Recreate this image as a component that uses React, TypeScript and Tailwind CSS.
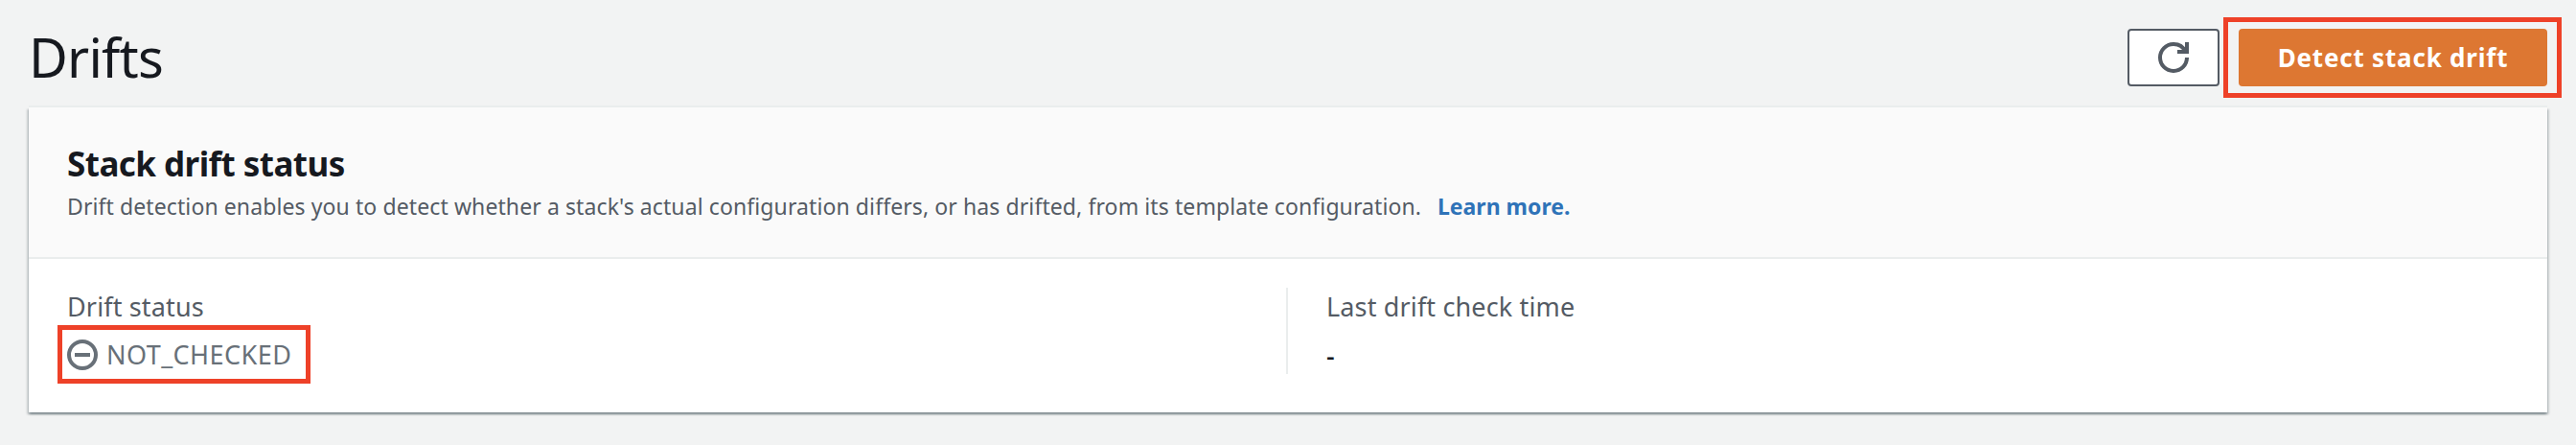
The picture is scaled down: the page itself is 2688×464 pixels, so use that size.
import type { ReactNode } from "react";

function RefreshIcon() {
  return (
    <svg className="size-8" viewBox="0 0 16 16" fill="none" stroke="#545b64" strokeWidth="2">
      <path d="M10 5h5V0" />
      <path d="M15 8a6.957 6.957 0 0 1-7 7 6.957 6.957 0 0 1-7-7 6.957 6.957 0 0 1 7-7 6.87 6.87 0 0 1 6.3 4" />
    </svg>
  );
}

function NotCheckedIcon() {
  return (
    <svg className="size-8 shrink-0" viewBox="0 0 16 16" fill="none" stroke="#687078" strokeWidth="2">
      <circle cx="8" cy="8" r="7" />
      <path d="M4 8h8" />
    </svg>
  );
}

function Label({ children }: { children: ReactNode }) {
  return (
    <div className="h-[30px] text-[27px] leading-[30px] tracking-[0.15px] text-[#545b64]">{children}</div>
  );
}

export default function App() {
  return (
    <main className="flex h-[464px] w-[2688px] flex-col overflow-hidden bg-[#f2f3f3] pr-[30px] pl-[30px] font-['Noto_Sans',sans-serif] whitespace-nowrap text-[#16191f]">
      <header className="flex h-[112px] items-start justify-between">
        <h1 className="mt-[29px] text-[56px] leading-[60px] tracking-[-0.8px]">Drifts</h1>
        <div className="flex gap-5 pt-[30px]">
          <button className="flex h-[60px] w-24 items-center justify-center rounded-[4px] border-2 border-[#545b64] bg-white">
            <RefreshIcon />
          </button>
          <div className="relative">
            <button className="flex h-[60px] w-[322px] items-center justify-center rounded-[4px] bg-[#dd7732] text-[26px] font-bold tracking-[0.8px] text-white">
              Detect stack drift
            </button>
            <div className="pointer-events-none absolute -top-[12px] -left-[16px] h-[84px] w-[353px] border-5 border-[#ee4128]" />
          </div>
        </div>
      </header>
      <section className="h-[318px] bg-white shadow-[0_2px_2px_0_rgba(0,28,36,0.3),2px_2px_2px_0_rgba(0,28,36,0.15),-2px_2px_2px_0_rgba(0,28,36,0.15),0_-2px_0_0_#eaeded]">
        <div className="flex h-[158px] flex-col gap-1 border-b-2 border-[#eaeded] bg-[#fafafa] pt-[39px] pl-10">
          <h2 className="text-[35px] leading-[40px] font-bold tracking-[-0.55px]">Stack drift status</h2>
          <p className="flex h-10 text-[23px] leading-[40px] text-[#545b64]">
            <span className="w-[1430px] tracking-[0.1px]">
              Drift detection enables you to detect whether a stack's actual configuration differs, or has drifted, from its template configuration.
            </span>
            <a className="font-bold text-[#2e73b8]">Learn more.</a>
          </p>
        </div>
        <div className="grid grid-cols-2 pt-[30px]">
          <div className="h-[90px] border-r-2 border-[#eaeded] pt-[5px] pl-10">
            <Label>Drift status</Label>
            <div className="relative mt-[15px] flex h-10 items-center gap-[9px] text-[27px] leading-[40px] tracking-[0.45px] text-[#687078]">
              <NotCheckedIcon />
              <span>NOT_CHECKED</span>
              <div className="pointer-events-none absolute -top-[11px] -left-[10px] h-[61px] w-[264px] border-5 border-[#ee4128]" />
            </div>
          </div>
          <div className="h-[90px] pt-[5px] pl-10">
            <Label>Last drift check time</Label>
            <div className="mt-4 text-[27px] leading-[40px] font-medium">-</div>
          </div>
        </div>
      </section>
    </main>
  );
}
